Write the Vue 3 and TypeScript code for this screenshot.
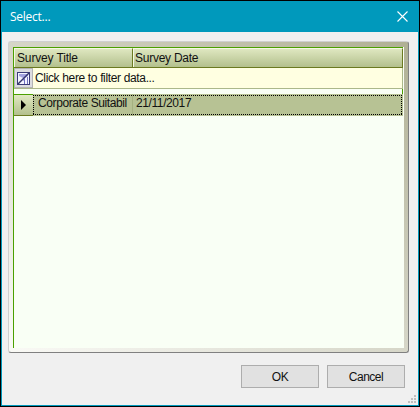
<script setup lang="ts">
import { ref } from 'vue'

interface Survey {
  title: string
  date: string
}

const surveys: Survey[] = [{ title: 'Corporate Suitabil', date: '21/11/2017' }]
const selected = ref(0)
</script>

<template>
  <div class="dialog">
    <header class="titlebar">
      <span class="caption">Select...</span>
      <svg class="close" width="11" height="11" viewBox="0 0 11 11">
        <path d="M.5 .5l10 10M10.5 .5l-10 10" stroke="#fff" stroke-width="1.1" />
      </svg>
    </header>

    <main class="panel">
      <div class="grid">
        <div class="head">
          <div class="col title"><span class="t-title">Survey Title</span></div>
          <div class="col date"><span class="t-date">Survey Date</span></div>
        </div>
        <div class="filter">
          <div class="filter-btn">
            <svg width="13" height="13" viewBox="0 0 13 13">
              <rect x=".5" y=".5" width="12" height="12" fill="#f4f4ff" stroke="#3c3c78" />
              <path d="M2 2h9v2L8 6v2L6 9V6L2 4z" fill="#a4a4e0" />
              <path d="M7.5 7v5M10.5 5v7" stroke="#7070c0" />
              <path d="M1 12L12 1" stroke="#34346c" stroke-width="1.4" />
            </svg>
          </div>
          <span class="t-filter">Click here to filter data...</span>
        </div>
        <div class="gap" />
        <div v-for="(s, i) in surveys" :key="i" class="row" @click="selected = i">
          <div class="selector">
            <svg v-if="selected === i" width="5" height="10" viewBox="0 0 5 10">
              <path d="M0 0l5 5-5 5z" fill="#000" />
            </svg>
          </div>
          <div class="cells">
            <div class="cell first"><span class="t-name">{{ s.title }}</span></div>
            <div class="cell"><span class="t-day">{{ s.date }}</span></div>
            <svg class="focus" width="370" height="20" shape-rendering="crispEdges">
              <path
                d="M0 .5h369M0 19.5h369M.5 0v20M368.5 0v20"
                fill="none"
                stroke="#000"
                stroke-dasharray="1 1"
              />
            </svg>
          </div>
        </div>
      </div>
    </main>

    <footer class="actions">
      <button><span class="t-ok">OK</span></button>
      <button><span class="t-cancel">Cancel</span></button>
    </footer>
    <svg class="grip" width="8" height="8" fill="#bfbfbf">
      <path d="M6 0h2v2h-2zM3 3h2v2h-2zM6 3h2v2h-2zM0 6h2v2h-2zM3 6h2v2h-2zM6 6h2v2h-2z" />
    </svg>
  </div>
</template>

<style>
body {
  margin: 0;
}
</style>

<style scoped>
.dialog {
  position: relative;
  box-sizing: border-box;
  width: 420px;
  height: 407px;
  border: 1px solid #000;
  background: #f0f0f0;
  box-shadow: inset 0 0 0 1px #0099bc;
  font: 12px/14px "Liberation Sans", Arial, sans-serif;
  color: #111;
  overflow: hidden;
  white-space: nowrap;
}
.titlebar {
  display: flex;
  align-items: center;
  justify-content: space-between;
  box-sizing: border-box;
  height: 31px;
  padding: 0 11px 0 9px;
  background: #0099bc;
  color: #fff;
}
.caption {
  font: 12px/16px "Open Sans", "Noto Sans", sans-serif;
  letter-spacing: -0.25px;
}
.panel {
  box-sizing: border-box;
  width: 401px;
  height: 312px;
  margin: 9px 0 0 7px;
  padding: 5px 4px 4px 4px;
  border: 1px solid;
  border-color: #d0d0d0 #808080 #808080 #d0d0d0;
  border-radius: 3px;
  background: linear-gradient(to top right, #fafaf6 0%, #d6d6c8 50%, #b0b094 100%);
}
.grid {
  box-sizing: border-box;
  height: 301px;
  border-left: 1px solid #4ba000;
  background: #f9fff5;
}
.head {
  display: flex;
  box-sizing: border-box;
  width: 389px;
  height: 21px;
  border-top: 1px solid #4ba000;
  border-bottom: 1px solid #6b7a20;
  background: linear-gradient(#e1e9c3, #b3c08d);
}
.col {
  box-sizing: border-box;
  border-top: 1px solid #f5f9e4;
  border-left: 1px solid #f5f9e4;
  border-right: 1px solid #6b7a20;
  padding: 2px 0 0 2px;
}
.col.title {
  width: 119px;
}
.col.date {
  flex: 1;
  padding-left: 1px;
}
.t-title {
  letter-spacing: -0.15px;
}
.t-date {
  letter-spacing: -0.25px;
}
.t-filter {
  letter-spacing: -0.35px;
}
.t-name {
  letter-spacing: -0.4px;
}
.t-day {
  letter-spacing: -0.4px;
}
.filter {
  display: flex;
  box-sizing: border-box;
  width: 389px;
  height: 21px;
  border-bottom: 1px solid #acb88a;
  border-right: 1px solid #acb88a;
  background: #ffffe1;
}
.filter > span {
  margin: 3px 0 0 2px;
}
.filter-btn {
  display: grid;
  place-items: center;
  box-sizing: border-box;
  width: 19px;
  height: 20px;
  border: 1px solid #b4b4b4;
  background: #dcdce0;
}
.gap {
  box-sizing: border-box;
  width: 389px;
  height: 5px;
  border-right: 1px solid #4ba000;
}
.row {
  display: flex;
  height: 22px;
}
.selector {
  box-sizing: border-box;
  width: 19px;
  padding: 5px 0 0 7px;
  border-top: 1px solid #4ba000;
  border-bottom: 1px solid #6b7a20;
  background: linear-gradient(#e1e9c3, #b3c08d);
}
.selector svg {
  display: block;
}
.cells {
  position: relative;
  display: flex;
  width: 370px;
  background: #b7c294;
}
.cell {
  box-sizing: border-box;
  padding: 2px 0 0 3px;
}
.cell.first {
  width: 100px;
  padding-left: 5px;
  border-right: 1px solid #a5b180;
}
.focus {
  position: absolute;
  left: 0;
  top: 1px;
}
.actions {
  display: flex;
  justify-content: flex-end;
  gap: 8px;
  padding: 12px 14px 0 0;
}
button {
  box-sizing: border-box;
  width: 78px;
  height: 23px;
  padding: 0;
  border: 1px solid #adadad;
  background: #e1e1e1;
  color: #111;
  font: inherit;
}
.t-ok {
  letter-spacing: -0.5px;
}
.t-cancel {
  letter-spacing: -0.5px;
}
.grip {
  position: absolute;
  right: 3px;
  bottom: 3px;
}
</style>
